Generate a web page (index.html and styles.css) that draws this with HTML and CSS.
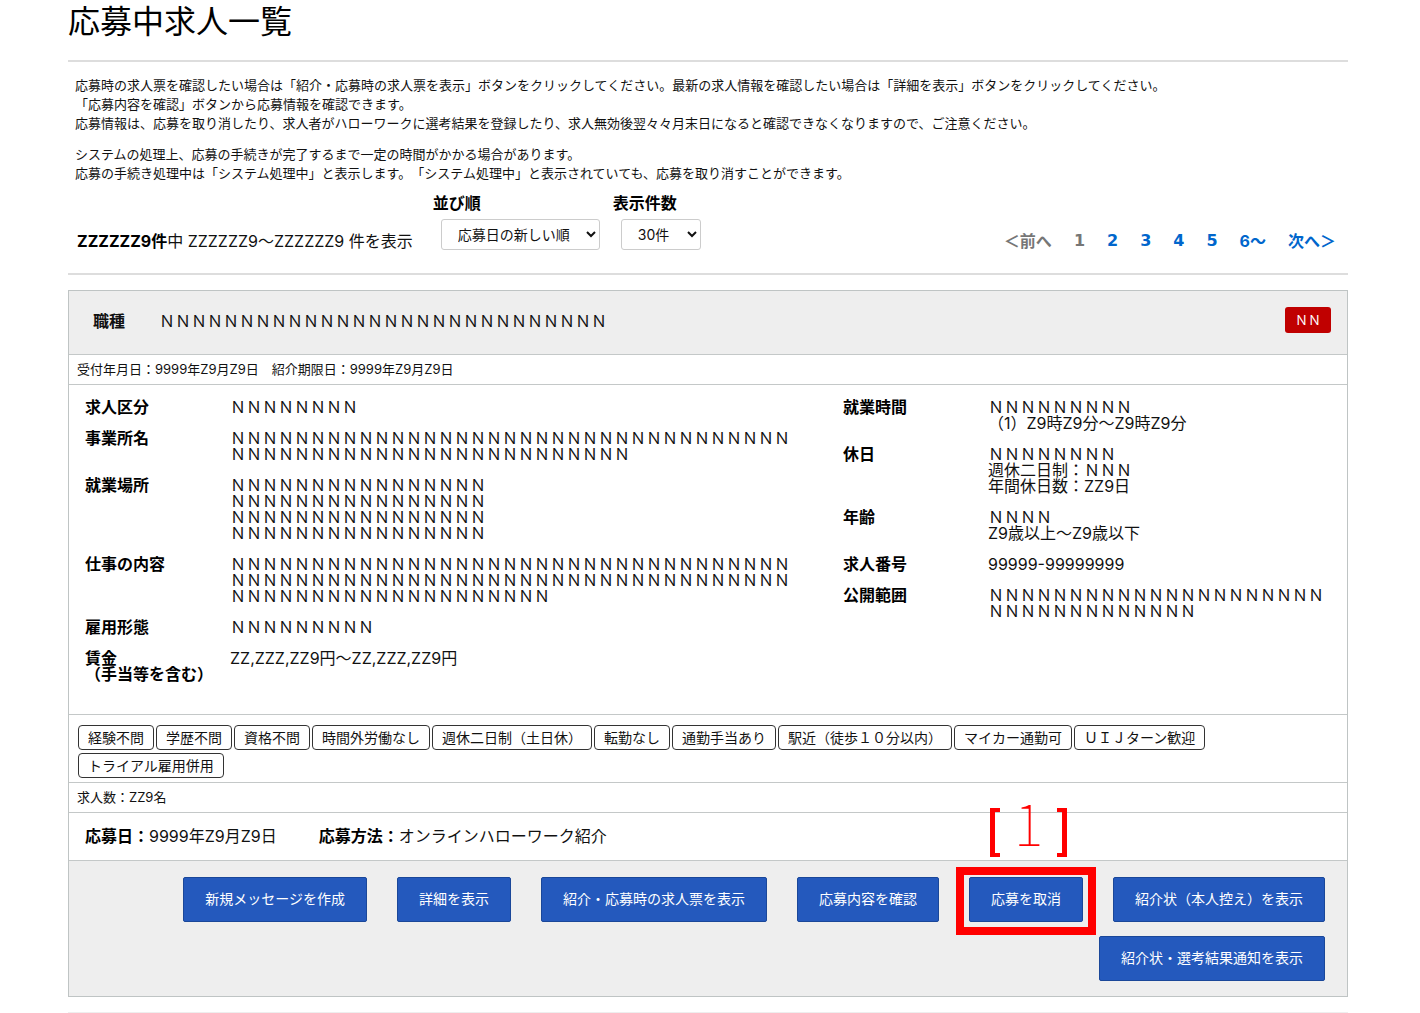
FILE: index.html
```html
<!DOCTYPE html>
<html lang="ja">
<head>
<meta charset="utf-8">
<meta name="viewport" content="width=device-width, initial-scale=1">
<title>応募中求人一覧</title>
<link rel="stylesheet" href="styles.css">
</head>
<body>
<main class="page">
  <h1 class="page-title">応募中求人一覧</h1>
  <div class="intro">
    <p>応募時の求人票を確認したい場合は「紹介・応募時の求人票を表示」ボタンをクリックしてください。最新の求人情報を確認したい場合は「詳細を表示」ボタンをクリックしてください。<br>「応募内容を確認」ボタンから応募情報を確認できます。<br>応募情報は、応募を取り消したり、求人者がハローワークに選考結果を登録したり、求人無効後翌&#12293;&#12293;月末日になると確認できなくなりますので、ご注意ください。</p>
    <p>システムの処理上、応募の手続きが完了するまで一定の時間がかかる場合があります。<br>応募の手続き処理中は「システム処理中」と表示します。「システム処理中」と表示されていても、応募を取り消すことができます。</p>
  </div>

  <div class="toolbar">
    <p class="count"><b>ZZZZZZ9件</b>中 ZZZZZZ9～ZZZZZZ9 件を表示</p>
    <div class="field">
      <label for="sort">並び順</label>
      <select id="sort" class="select select-sort"><option>応募日の新しい順</option></select>
    </div>
    <div class="field">
      <label for="per-page">表示件数</label>
      <select id="per-page" class="select select-count"><option>30件</option></select>
    </div>
    <nav class="pager" aria-label="ページ送り">
      <span class="pager-off">＜前へ</span>
      <span class="pager-off pager-num" aria-current="page">1</span>
      <a class="pager-num" href="#p2">2</a>
      <a class="pager-num" href="#p3">3</a>
      <a class="pager-num" href="#p4">4</a>
      <a class="pager-num" href="#p5">5</a>
      <a href="#p6">6～</a>
      <a href="#next">次へ＞</a>
    </nav>
  </div>

  <article class="job">
    <header class="job-head">
      <h2 class="job-label">職種</h2>
      <p class="job-name">ＮＮＮＮＮＮＮＮＮＮＮＮＮＮＮＮＮＮＮＮＮＮＮＮＮＮＮＮ</p>
      <span class="badge">ＮＮ</span>
    </header>
    <p class="job-note">受付年月日：9999年Z9月Z9日　紹介期限日：9999年Z9月Z9日</p>
    <div class="job-details">
      <dl class="details">
        <dt>求人区分</dt>
        <dd>ＮＮＮＮＮＮＮＮ</dd>
        <dt>事業所名</dt>
        <dd>ＮＮＮＮＮＮＮＮＮＮＮＮＮＮＮＮＮＮＮＮＮＮＮＮＮＮＮＮＮＮＮＮＮＮＮ<br>ＮＮＮＮＮＮＮＮＮＮＮＮＮＮＮＮＮＮＮＮＮＮＮＮＮ</dd>
        <dt>就業場所</dt>
        <dd>ＮＮＮＮＮＮＮＮＮＮＮＮＮＮＮＮ<br>ＮＮＮＮＮＮＮＮＮＮＮＮＮＮＮＮ<br>ＮＮＮＮＮＮＮＮＮＮＮＮＮＮＮＮ<br>ＮＮＮＮＮＮＮＮＮＮＮＮＮＮＮＮ</dd>
        <dt>仕事の内容</dt>
        <dd>ＮＮＮＮＮＮＮＮＮＮＮＮＮＮＮＮＮＮＮＮＮＮＮＮＮＮＮＮＮＮＮＮＮＮＮ<br>ＮＮＮＮＮＮＮＮＮＮＮＮＮＮＮＮＮＮＮＮＮＮＮＮＮＮＮＮＮＮＮＮＮＮＮ<br>ＮＮＮＮＮＮＮＮＮＮＮＮＮＮＮＮＮＮＮＮ</dd>
        <dt>雇用形態</dt>
        <dd>ＮＮＮＮＮＮＮＮＮ</dd>
        <dt>賃金<br>（手当等を含む）</dt>
        <dd>ZZ,ZZZ,ZZ9円～ZZ,ZZZ,ZZ9円</dd>
      </dl>
      <dl class="details">
        <dt>就業時間</dt>
        <dd>ＮＮＮＮＮＮＮＮＮ<br>（1）Z9時Z9分～Z9時Z9分</dd>
        <dt>休日</dt>
        <dd>ＮＮＮＮＮＮＮＮ<br>週休二日制：ＮＮＮ<br>年間休日数：ZZ9日</dd>
        <dt>年齢</dt>
        <dd>ＮＮＮＮ<br>Z9歳以上～Z9歳以下</dd>
        <dt>求人番号</dt>
        <dd>99999-99999999</dd>
        <dt>公開範囲</dt>
        <dd>ＮＮＮＮＮＮＮＮＮＮＮＮＮＮＮＮＮＮＮＮＮ<br>ＮＮＮＮＮＮＮＮＮＮＮＮＮ</dd>
      </dl>
    </div>
    <ul class="tags">
      <li>経験不問</li>
      <li>学歴不問</li>
      <li>資格不問</li>
      <li>時間外労働なし</li>
      <li>週休二日制（土日休）</li>
      <li>転勤なし</li>
      <li>通勤手当あり</li>
      <li>駅近（徒歩１０分以内）</li>
      <li>マイカー通勤可</li>
      <li>ＵＩＪターン歓迎</li>
      <li>トライアル雇用併用</li>
    </ul>
    <p class="job-note">求人数：ZZ9名</p>
    <div class="applied">
      <p><b>応募日：</b>9999年Z9月Z9日</p>
      <p><b>応募方法：</b>オンラインハローワーク紹介</p>
    </div>
    <footer class="actions">
      <button type="button" class="btn">新規メッセージを作成</button>
      <button type="button" class="btn">詳細を表示</button>
      <button type="button" class="btn">紹介・応募時の求人票を表示</button>
      <button type="button" class="btn">応募内容を確認</button>
      <div class="callout">
        <button type="button" class="btn">応募を取消</button>
        <span class="callout-frame"></span>
        <span class="callout-number">1</span>
      </div>
      <button type="button" class="btn">紹介状（本人控え）を表示</button>
      <button type="button" class="btn">紹介状・選考結果通知を表示</button>
    </footer>
  </article>
  <hr class="page-end">
</main>
</body>
</html>
```

FILE: styles.css
```css
*,
*::before,
*::after {
  box-sizing: border-box;
}

body,
h1,
h2,
p,
dl,
dd,
ul {
  margin: 0;
  padding: 0;
}

body {
  background: #fff;
  color: #111;
  font-family: Inter, "Noto Sans CJK JP", sans-serif;
  font-size: 16px;
  line-height: 16px;
  text-spacing-trim: space-all;
}

b,
dt,
label {
  color: #000;
  font-weight: 700;
}

.page {
  margin: 0 72px 0 68px;
}

.page-title {
  padding-bottom: 16px;
  border-bottom: 2px solid #ddd;
  color: #000;
  font-size: 32px;
  font-weight: 400;
  line-height: 44px;
}

.intro {
  display: flex;
  flex-direction: column;
  gap: 12px;
  padding: 14px 7px 0;
  font-size: 13px;
  line-height: 19px;
}

.toolbar {
  display: flex;
  align-items: flex-end;
  gap: 13px;
  padding: 12px 12px 23px 9px;
  border-bottom: 2px solid #ddd;
}

.count {
  padding: 0 7px 1px 0;
}

.field {
  display: flex;
  flex-direction: column;
  gap: 8px;
}

.select {
  height: 31px;
  margin-left: 8px;
  padding: 0 0 0 12px;
  border: 1px solid #ccc;
  border-radius: 3px;
  background: #fff;
  color: #111;
  font: inherit;
  font-size: 14px;
}

.select-sort {
  width: 159px;
}

.select-count {
  width: 80px;
}

.pager {
  display: flex;
  gap: 22px;
  margin-left: auto;
  padding-bottom: 1px;
  font-weight: 700;
}

.pager a {
  color: #0066cc;
  text-decoration: none;
}

.pager .pager-off {
  color: #767676;
}

.pager-num {
  font-family: "DejaVu Sans", sans-serif;
}

.job {
  margin-top: 15px;
  border: 1px solid #bfc4c4;
}

.job > * + * {
  border-top: 1px solid #c4c8c8;
}

.job-head {
  display: flex;
  align-items: center;
  min-height: 63px;
  padding: 0 16px 4px 24px;
  background: #eee;
}

.job-label {
  width: 66px;
  font-size: 16px;
}

.badge {
  margin: 0 0 2px auto;
  padding: 0 10px;
  border-radius: 3px;
  background: #c00000;
  color: #fff;
  font-size: 13px;
  line-height: 26px;
}

.job-note {
  padding: 0 8px;
  font-size: 13px;
  line-height: 29px;
}

.job-details {
  display: grid;
  grid-template-columns: 758fr 488fr;
  padding: 14px 16px 32px;
}

.details {
  display: grid;
  grid-template-columns: 145px 1fr;
  align-content: start;
  row-gap: 15px;
}

.tags {
  display: flex;
  flex-wrap: wrap;
  gap: 3px 2px;
  padding: 10px 9px 4px;
  list-style: none;
  font-size: 14px;
  line-height: 23px;
}

.tags li {
  padding: 0 9px;
  border: 1px solid #333;
  border-radius: 4px;
}

.applied {
  display: flex;
  gap: 42px;
  padding: 15px 16px 16px;
}

.actions {
  display: flex;
  flex-wrap: wrap;
  justify-content: flex-end;
  gap: 14px 30px;
  padding: 16px 22px 15px;
  background: #eee;
}

.btn {
  height: 45px;
  padding: 0 21px 2px;
  border: 1px solid #1a4799;
  border-radius: 2px;
  background: #2459bd;
  color: #fff;
  font: inherit;
  font-size: 14px;
}

.callout {
  position: relative;
}

/* Red marker drawn over the card around the highlighted button */
.callout-frame {
  position: absolute;
  inset: -10px -13px -13px;
  border: 8px solid #f00;
  pointer-events: none;
}

.callout-number {
  position: absolute;
  bottom: 65px;
  left: 21px;
  width: 77px;
  height: 49px;
  color: #f00;
  font-family: "Noto Sans CJK JP", sans-serif;
  font-size: 56px;
  font-weight: 100;
  line-height: 28px;
  text-align: center;
}

.callout-number::before,
.callout-number::after {
  position: absolute;
  top: 0;
  width: 10px;
  height: 49px;
  border: solid #f00;
  content: "";
}

.callout-number::before {
  left: 0;
  border-width: 4px 0 4px 5px;
}

.callout-number::after {
  right: 0;
  border-width: 4px 5px 4px 0;
}

.page-end {
  height: 1px;
  margin: 15px 0 0;
  border: 0;
  background: #eee;
}
```
